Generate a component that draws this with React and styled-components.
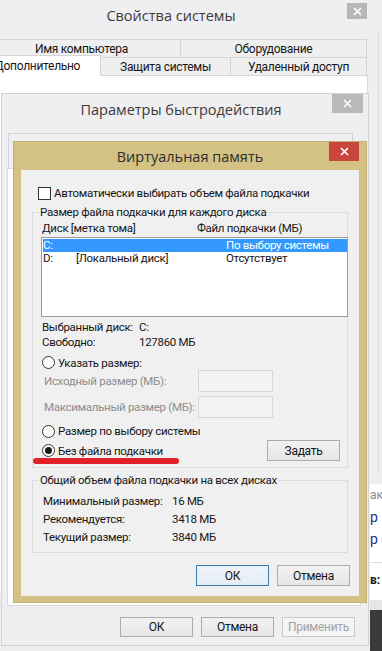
import React from "react";
import styled, { createGlobalStyle } from "styled-components";

const UI = `Roboto, "Open Sans", "Noto Sans", sans-serif`;
const TITLE = `"Open Sans", "Noto Sans", sans-serif`;

const GlobalStyle = createGlobalStyle`
  html, body { margin: 0; padding: 0; }
  body { background: #efeef0; font-family: ${UI}; }
  * { box-sizing: border-box; }
`;

const Desktop = styled.div`
  position: relative;
  width: 382px;
  height: 651px;
  overflow: hidden;
  background: #efeef0;
  font-family: ${UI};
  font-size: 11.5px;
  letter-spacing: -0.3px;
  color: #161616;
`;

/* background application peeking out at the right edge */
const SideApp = styled.div`
  position: absolute;
  left: 370px;
  top: 0;
  width: 12px;
  height: 651px;
  display: flex;
  flex-direction: column;
`;
const SideChrome = styled.div`
  height: 484px;
  background: #eeedef;
  padding: 34px 0 14px 8px;
  display: flex;
`;
const SideEdge = styled.div`
  flex: 1;
  border-left: 1px solid #d9d9d9;
`;
const SidePage = styled.div`
  height: 116px;
  background: #fff;
  display: flex;
  flex-direction: column;
  white-space: nowrap;
  overflow: hidden;
  letter-spacing: 0;
`;
const SideLine = styled.div`
  height: ${(p) => p.$h}px;
  line-height: ${(p) => p.$h}px;
  font-size: ${(p) => p.$size}px;
  color: ${(p) => p.$color};
  font-weight: ${(p) => (p.$bold ? 700 : 400)};
  flex: none;
`;
const SideRule = styled.div`
  flex: none;
  height: 1px;
  background: #dedede;
  margin: ${(p) => p.$m};
`;
const OrangeMark = styled.span`
  display: inline-block;
  width: 3px;
  height: 7px;
  margin-left: 2px;
  background: #eaa53e;
  vertical-align: middle;
`;
const SideGap = styled.div`
  height: 10px;
  background: #e6e6e6;
  flex: none;
`;
const SideDark = styled.div`
  flex: 1;
  background: #3a3a3b;
`;

/* windows */
const Win = styled.div`
  position: absolute;
  left: ${(p) => p.$x}px;
  top: ${(p) => p.$y}px;
  width: ${(p) => p.$w}px;
  height: ${(p) => p.$h}px;
  background: ${(p) => p.$bg};
  border: 1px solid ${(p) => p.$edge};
  display: flex;
  flex-direction: column;
`;
const TitleBar = styled.div`
  position: relative;
  flex: none;
  height: ${(p) => p.$h}px;
  display: flex;
  align-items: center;
  justify-content: center;
  padding: 0 ${(p) => p.$pr || 0}px 0 ${(p) => p.$pl || 0}px;
  font-family: ${TITLE};
  font-size: 14.5px;
  letter-spacing: 0;
  color: ${(p) => p.$color || "#3b3b3b"};
  white-space: nowrap;
`;
const CloseBtn = styled.div`
  position: absolute;
  top: ${(p) => p.$t}px;
  right: ${(p) => p.$r}px;
  width: ${(p) => p.$w}px;
  height: ${(p) => p.$h}px;
  background: ${(p) => p.$bg};
  display: flex;
  align-items: center;
  justify-content: center;
`;
const CloseX = () => (
  <svg width="9" height="9" viewBox="0 0 9 9">
    <path d="M1 1L8 8M8 1L1 8" stroke="#fff" strokeWidth="1.7" />
  </svg>
);

/* window 1: system properties */
const W1Body = styled.div`
  flex: 1;
  display: flex;
  flex-direction: column;
  padding: 9px 1px 0 19px;
`;
const TabRow = styled.div`
  display: flex;
  align-items: flex-end;
  margin-top: ${(p) => p.$mt || 0}px;
`;
const Tab = styled.div`
  flex: none;
  width: ${(p) => p.$w}px;
  height: ${(p) => (p.$sel ? 21 : 19)}px;
  margin-left: ${(p) => (p.$first ? 0 : -1)}px;
  border: 1px solid #d5d5d5;
  border-bottom-color: ${(p) => (p.$sel ? "#fff" : "#d5d5d5")};
  background: ${(p) => (p.$sel ? "#fff" : "#efeff0")};
  position: relative;
  z-index: ${(p) => (p.$sel ? 2 : 1)};
  display: flex;
  align-items: center;
  justify-content: center;
  padding-right: ${(p) => p.$pr || 0}px;
  font-size: 12px;
  color: #161616;
  white-space: nowrap;
`;
const W1Panel = styled.div`
  flex: none;
  height: 520px;
  margin-top: -1px;
  background: #fff;
  border: 1px solid #d9d9d9;
`;

/* window 2: performance options */
const W2Body = styled.div`
  flex: 1;
  display: flex;
  flex-direction: column;
  padding: 8px 7px 0 5px;
`;
const W2TabHead = styled.div`
  flex: none;
  width: 345px;
  height: 35px;
  margin-left: 1px;
  border: 1px solid #d5d5d5;
  border-bottom: none;
`;
const W2Panel = styled.div`
  flex: none;
  height: 438px;
  background: #fff;
  border: 1px solid #d9d9d9;
`;
const ButtonRow = styled.div`
  display: flex;
  justify-content: flex-end;
  gap: 8px;
  margin: ${(p) => p.$m};
`;
const Button = styled.div`
  width: 73px;
  height: ${(p) => p.$h || 21}px;
  display: flex;
  align-items: center;
  justify-content: center;
  border: 1px solid ${(p) => (p.$default ? "#3d7bad" : p.$disabled ? "#c9c9c9" : "#acacac")};
  background: ${(p) =>
    p.$disabled
      ? "#f4f4f4"
      : p.$default
      ? "linear-gradient(#eef3f8, #e4ecf4)"
      : "linear-gradient(#f2f2f2, #e6e6e6)"};
  color: ${(p) => (p.$disabled ? "#a2a2a2" : "#161616")};
  font-size: 12px;
`;

/* window 3: virtual memory */
const W3Body = styled.div`
  flex: 1;
  margin: 0 7px 6px 7px;
  background: #f0f0f0;
  padding: 15px 11px 0 11px;
  display: flex;
  flex-direction: column;
`;
const CheckRow = styled.label`
  height: 16px;
  display: flex;
  align-items: center;
  gap: 3px;
  margin-left: 6px;
  white-space: nowrap;
`;
const CheckBox = styled.span`
  flex: none;
  width: 13px;
  height: 13px;
  border: 1px solid #333;
  background: #fff;
`;
const Group = styled.fieldset`
  margin: ${(p) => p.$mt}px 0 0 0;
  padding: 0 0 6px 0;
  border: 1px solid #dcdcdc;
  min-width: 0;
`;
const Legend = styled.legend`
  padding: 0 1px;
  margin-left: 6px;
  line-height: 15px;
  font-size: 11.5px;
  color: #161616;
  white-space: nowrap;
`;
const GroupInner = styled.div`
  display: flex;
  flex-direction: column;
  padding-left: 9px;
`;
const Grid = styled.div`
  display: grid;
  grid-template-columns: ${(p) => p.$cols};
  height: ${(p) => p.$h}px;
  line-height: ${(p) => p.$h}px;
  margin: ${(p) => p.$m || "0"};
  white-space: nowrap;
  color: ${(p) => (p.$sel ? "#fff" : "inherit")};
  background: ${(p) => (p.$sel ? "#3399ff" : "transparent")};
`;
const ListBox = styled.div`
  width: 307px;
  height: 80px;
  margin: 1px 0 0 -1px;
  border: 1px solid #9a9a9a;
  background: #fff;
  padding: 1px 0 0 1px;
  display: flex;
  flex-direction: column;
`;
const RadioRow = styled.div`
  position: relative;
  display: flex;
  align-items: center;
  gap: 3px;
  height: ${(p) => p.$h}px;
  margin-top: ${(p) => p.$mt || 0}px;
  white-space: nowrap;
`;
const Radio = styled.span`
  flex: none;
  width: 13px;
  height: 13px;
  border-radius: 50%;
  border: 1px solid #333;
  background: #fff;
  display: flex;
  align-items: center;
  justify-content: center;
  &::after {
    content: "";
    width: 7px;
    height: 7px;
    border-radius: 50%;
    background: #1a1a1a;
    display: ${(p) => (p.$on ? "block" : "none")};
  }
`;
const SizeRow = styled.div`
  display: flex;
  align-items: center;
  height: 22px;
  margin: ${(p) => p.$mt || 0}px 0 0 2px;
  color: #8d8d8d;
  white-space: nowrap;
`;
const SizeLabel = styled.span`
  width: 154px;
  flex: none;
`;
const TextBox = styled.span`
  width: 75px;
  height: 22px;
  border: 1px solid #d7d7d7;
  background: #f3f3f3;
`;
const PushRight = styled.div`
  margin-left: auto;
  margin-right: 7px;
`;
const RedUnderline = styled.span`
  position: absolute;
  left: -9px;
  top: 18px;
  width: 146px;
  height: 6px;
  border-radius: 3px;
  background: #e2202a;
`;

export default function App() {
  return (
    <>
      <GlobalStyle />
      <Desktop>
        <SideApp>
          <SideChrome>
            <SideEdge />
          </SideChrome>
          <SidePage>
            <SideLine $h={22} $size={12} $color="#8a8a8a">ак</SideLine>
            <SideLine $h={22} $size={14} $color="#2f2b86">р г</SideLine>
            <SideLine $h={23} $size={14} $color="#2f2b86">р с</SideLine>
            <SideRule $m="11px 0 7px 0" />
            <SideLine $h={20} $size={12} $color="#222" $bold>
              в:<OrangeMark />
            </SideLine>
          </SidePage>
          <SideGap />
          <SideDark />
        </SideApp>

        <Win $x={-38} $y={0} $w={408} $h={700} $bg="#efeef0" $edge="#efeef0">
          <TitleBar $h={29} $pl={10}>
            Свойства системы
            <CloseBtn $t={2} $r={2} $w={20} $h={16} $bg="#b7b7b7">
              <CloseX />
            </CloseBtn>
          </TitleBar>
          <W1Body>
            <TabRow>
              <Tab $first $w={199}>Имя компьютера</Tab>
              <Tab $w={187}>Оборудование</Tab>
            </TabRow>
            <TabRow $mt={-3}>
              <Tab $first $sel $w={119} $pr={8}>Дополнительно</Tab>
              <Tab $w={131}>Защита системы</Tab>
              <Tab $w={137}>Удаленный доступ</Tab>
            </TabRow>
            <W1Panel />
          </W1Body>
        </Win>

        <Win $x={1} $y={93} $w={368} $h={553} $bg="#efeef0" $edge="#d2d2d2">
          <TitleBar $h={31} $pr={8}>
            Параметры быстродействия
            <CloseBtn $t={0} $r={5} $w={31} $h={19} $bg="#b9b9b9">
              <CloseX />
            </CloseBtn>
          </TitleBar>
          <W2Body>
            <W2TabHead />
            <W2Panel />
            <ButtonRow $m="11px 6px 0 0">
              <Button $h={20}>ОК</Button>
              <Button $h={20}>Отмена</Button>
              <Button $h={20} $disabled>Применить</Button>
            </ButtonRow>
          </W2Body>
        </Win>

        <Win $x={13} $y={141} $w={354} $h={462} $bg="#d3c284" $edge="#c3b173">
          <TitleBar $h={28} $color="#2e2e2e">
            Виртуальная память
            <CloseBtn $t={0} $r={7} $w={30} $h={19} $bg="#c8463d">
              <CloseX />
            </CloseBtn>
          </TitleBar>
          <W3Body>
            <CheckRow>
              <CheckBox />
              Автоматически выбирать объем файла подкачки
            </CheckRow>

            <Group $mt={4}>
              <Legend>Размер файла подкачки для каждого диска</Legend>
              <GroupInner>
                <Grid $cols="155px 1fr" $h={16}>
                  <span>Диск [метка тома]</span>
                  <span>Файл подкачки (МБ)</span>
                </Grid>
                <ListBox>
                  <Grid $cols="33px 150px 1fr" $h={13} $sel>
                    <span>C:</span>
                    <span></span>
                    <span>По выбору системы</span>
                  </Grid>
                  <Grid $cols="33px 150px 1fr" $h={13}>
                    <span>D:</span>
                    <span>[Локальный диск]</span>
                    <span>Отсутствует</span>
                  </Grid>
                </ListBox>
                <Grid $cols="97px 1fr" $h={15} $m="3px 0 0 0">
                  <span>Выбранный диск:</span>
                  <span>C:</span>
                </Grid>
                <Grid $cols="97px 1fr" $h={15}>
                  <span>Свободно:</span>
                  <span>127860 МБ</span>
                </Grid>
                <RadioRow $h={15} $mt={5}>
                  <Radio />
                  Указать размер:
                </RadioRow>
                <SizeRow>
                  <SizeLabel>Исходный размер (МБ):</SizeLabel>
                  <TextBox />
                </SizeRow>
                <SizeRow $mt={4}>
                  <SizeLabel>Максимальный размер (МБ):</SizeLabel>
                  <TextBox />
                </SizeRow>
                <RadioRow $h={16} $mt={5}>
                  <Radio />
                  Размер по выбору системы
                </RadioRow>
                <RadioRow $h={21} $mt={1}>
                  <Radio $on />
                  Без файла подкачки
                  <RedUnderline />
                  <PushRight>
                    <Button>Задать</Button>
                  </PushRight>
                </RadioRow>
              </GroupInner>
            </Group>

            <Group $mt={5}>
              <Legend>Общий объем файла подкачки на всех дисках</Legend>
              <GroupInner>
                <Grid $cols="129px 1fr" $h={18} $m="4px 0 0 1px">
                  <span>Минимальный размер:</span>
                  <span>16 МБ</span>
                </Grid>
                <Grid $cols="129px 1fr" $h={18} $m="0 0 0 1px">
                  <span>Рекомендуется:</span>
                  <span>3418 МБ</span>
                </Grid>
                <Grid $cols="129px 1fr" $h={18} $m="0 0 0 1px">
                  <span>Текущий размер:</span>
                  <span>3840 МБ</span>
                </Grid>
              </GroupInner>
            </Group>

            <ButtonRow $m="12px -2px 0 0">
              <Button $default>ОК</Button>
              <Button>Отмена</Button>
            </ButtonRow>
          </W3Body>
        </Win>
      </Desktop>
    </>
  );
}
